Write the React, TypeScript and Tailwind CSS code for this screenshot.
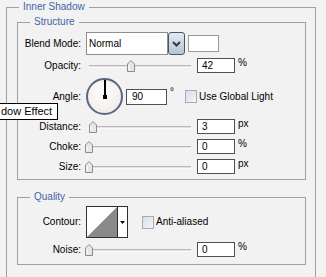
import React from "react";

function Thumb({ cls }: { cls: string }) {
  return (
    <svg className={`absolute top-[2px] ${cls}`} width="8" height="12" viewBox="0 0 8 12">
      <path d="M0.5 4 L4 0.5 L7.5 4 L7.5 11.5 L0.5 11.5 Z" fill="#e6e6e6" stroke="#8c8c8c" strokeWidth="1" />
      <path d="M2 5 L2 10" stroke="#ffffff" strokeWidth="1" />
    </svg>
  );
}

function Slider({ cls }: { cls: string }) {
  return (
    <div className="relative w-[111px] h-[15px] shrink-0">
      <div className="absolute left-[3px] top-[7px] w-[102px] h-[3px] bg-[#e2e2e2] border-t border-[#b8b8b8] border-b border-b-[#f8f8f8]" />
      <Thumb cls={cls} />
    </div>
  );
}

function Input({ v }: { v: string }) {
  return (
    <div className="w-[38px] h-[15px] shrink-0 border border-[#505050] bg-white pl-[4px] text-[10px] leading-[13px] text-black">
      {v}
    </div>
  );
}

function Label({ t }: { t: string }) {
  return <div className="w-[63px] shrink-0 text-right text-[10px] leading-[12px] text-black">{t}</div>;
}

function Unit({ t }: { t: string }) {
  return <div className="ml-[3px] self-start -mt-[1px] text-[10px] leading-[12px] text-black">{t}</div>;
}

function Check() {
  return (
    <div className="w-[12px] h-[13px] shrink-0 border border-[#a3adba] bg-gradient-to-br from-[#d6dee8] to-[#f3f6f9]" />
  );
}

function SliderRow({ label, thumb, value, unit, mt }: { label: string; thumb: string; value: string; unit: string; mt: string }) {
  return (
    <div className={`flex items-center h-[15px] ${mt}`}>
      <Label t={label} />
      <div className="ml-[5px] flex items-center">
        <Slider cls={thumb} />
        <Input v={value} />
        <Unit t={unit} />
      </div>
    </div>
  );
}

export default function App() {
  return (
    <div className="w-[326px] h-[277px] overflow-hidden bg-[#f2f2f2] pt-[7px] pl-[6px] font-['Liberation_Sans',Arial,sans-serif]">
      <div className="relative w-[310px] h-[300px] border border-b-0 border-[#a0a0a0] pl-[10px] pr-[9px] pt-[14px]">
        <span className="absolute left-[12px] -top-[7px] px-[4px] bg-[#f2f2f2] text-[10px] leading-[12px] text-[#4563a6]">
          Inner Shadow
        </span>

        {/* Structure */}
        <div className="relative h-[158px] border border-[#a0a0a0] pt-[9px]">
          <span className="absolute left-[12px] -top-[7px] px-[4px] bg-[#f2f2f2] text-[10px] leading-[12px] text-[#4563a6]">
            Structure
          </span>

          {/* Blend mode */}
          <div className="flex items-center h-[23px]">
            <Label t="Blend Mode:" />
            <div className="ml-[5px] flex items-center">
              <div className="w-[82px] h-[23px] border border-[#8e8e8e] bg-white pl-[2px] text-[10px] leading-[21px] text-black">
                Normal
              </div>
              <div className="w-[17px] h-[23px] rounded-[3px] border border-[#4a5563] bg-gradient-to-b from-[#e3e9f1] to-[#b9c4d2] flex items-center justify-center">
                <svg width="9" height="6" viewBox="0 0 9 6">
                  <path d="M1 1 L4.5 4.5 L8 1" fill="none" stroke="#2c3a52" strokeWidth="2" />
                </svg>
              </div>
              <div className="ml-[3px] w-[31px] h-[17px] border border-[#9a9a9a] bg-white" />
            </div>
          </div>

          <SliderRow label="Opacity:" thumb="left-[41px]" value="42" unit="%" mt="mt-[3px]" />

          {/* Angle */}
          <div className="flex items-center h-[37px] mt-[5px]">
            <Label t="Angle:" />
            <div className="ml-[5px] flex items-center">
              <div className="relative w-[37px] h-[37px] rounded-full border-2 border-[#5a6780] bg-[radial-gradient(circle_at_45%_40%,#ffffff,#f5f0eb_60%,#e8e2dc)] shrink-0">
                <div className="absolute left-[16px] top-0 w-[2px] h-[17px] bg-black" />
                <div className="absolute left-[15px] top-[15px] w-[4px] h-[4px] bg-black" />
              </div>
              <div className="ml-[3px] w-[41px] h-[16px] border border-[#505050] bg-white pl-[5px] text-[10px] leading-[14px] text-black">
                90
              </div>
              <div className="ml-[3px] w-[15px] self-start mt-[9px] text-[10px] leading-[10px] text-black">°</div>
              <Check />
              <div className="ml-[2px] text-[10px] leading-[12px] text-black">Use Global Light</div>
            </div>
          </div>

          <SliderRow label="Distance:" thumb="left-[3px]" value="3" unit="px" mt="mt-[4px]" />
          <SliderRow label="Choke:" thumb="left-[-1px]" value="0" unit="%" mt="mt-[5px]" />
          <SliderRow label="Size:" thumb="left-[-1px]" value="0" unit="px" mt="mt-[5px]" />
        </div>

        {/* Quality */}
        <div className="relative mt-[17px] h-[68px] border border-[#a0a0a0] pt-[8px]">
          <span className="absolute left-[12px] -top-[7px] px-[4px] bg-[#f2f2f2] text-[10px] leading-[12px] text-[#4563a6]">
            Quality
          </span>
          <div className="flex items-center h-[32px]">
            <Label t="Contour:" />
            <div className="ml-[5px] flex items-center">
              <div className="w-[42px] h-[32px] border border-[#303030] bg-white flex">
                <svg width="30" height="30" viewBox="0 0 30 30" className="shrink-0">
                  <polygon points="0,30 30,0 30,30" fill="#8a8a8a" />
                </svg>
                <div className="w-[10px] h-[30px] border-l border-[#303030] flex items-center justify-center">
                  <svg width="5" height="3" viewBox="0 0 5 3">
                    <polygon points="0,0 5,0 2.5,3" fill="#000" />
                  </svg>
                </div>
              </div>
              <div className="ml-[14px]">
                <Check />
              </div>
              <div className="ml-[2px] text-[10px] leading-[12px] text-black">Anti-aliased</div>
            </div>
          </div>
          <SliderRow label="Noise:" thumb="left-[-1px]" value="0" unit="%" mt="mt-[4px]" />
        </div>
      </div>

      {/* tooltip */}
      <div className="absolute left-0 top-[103px] h-[17px] w-[58px] border border-l-0 border-black bg-white pl-[1px] text-[11px] leading-[15px] text-black">
        dow Effect
      </div>
    </div>
  );
}
